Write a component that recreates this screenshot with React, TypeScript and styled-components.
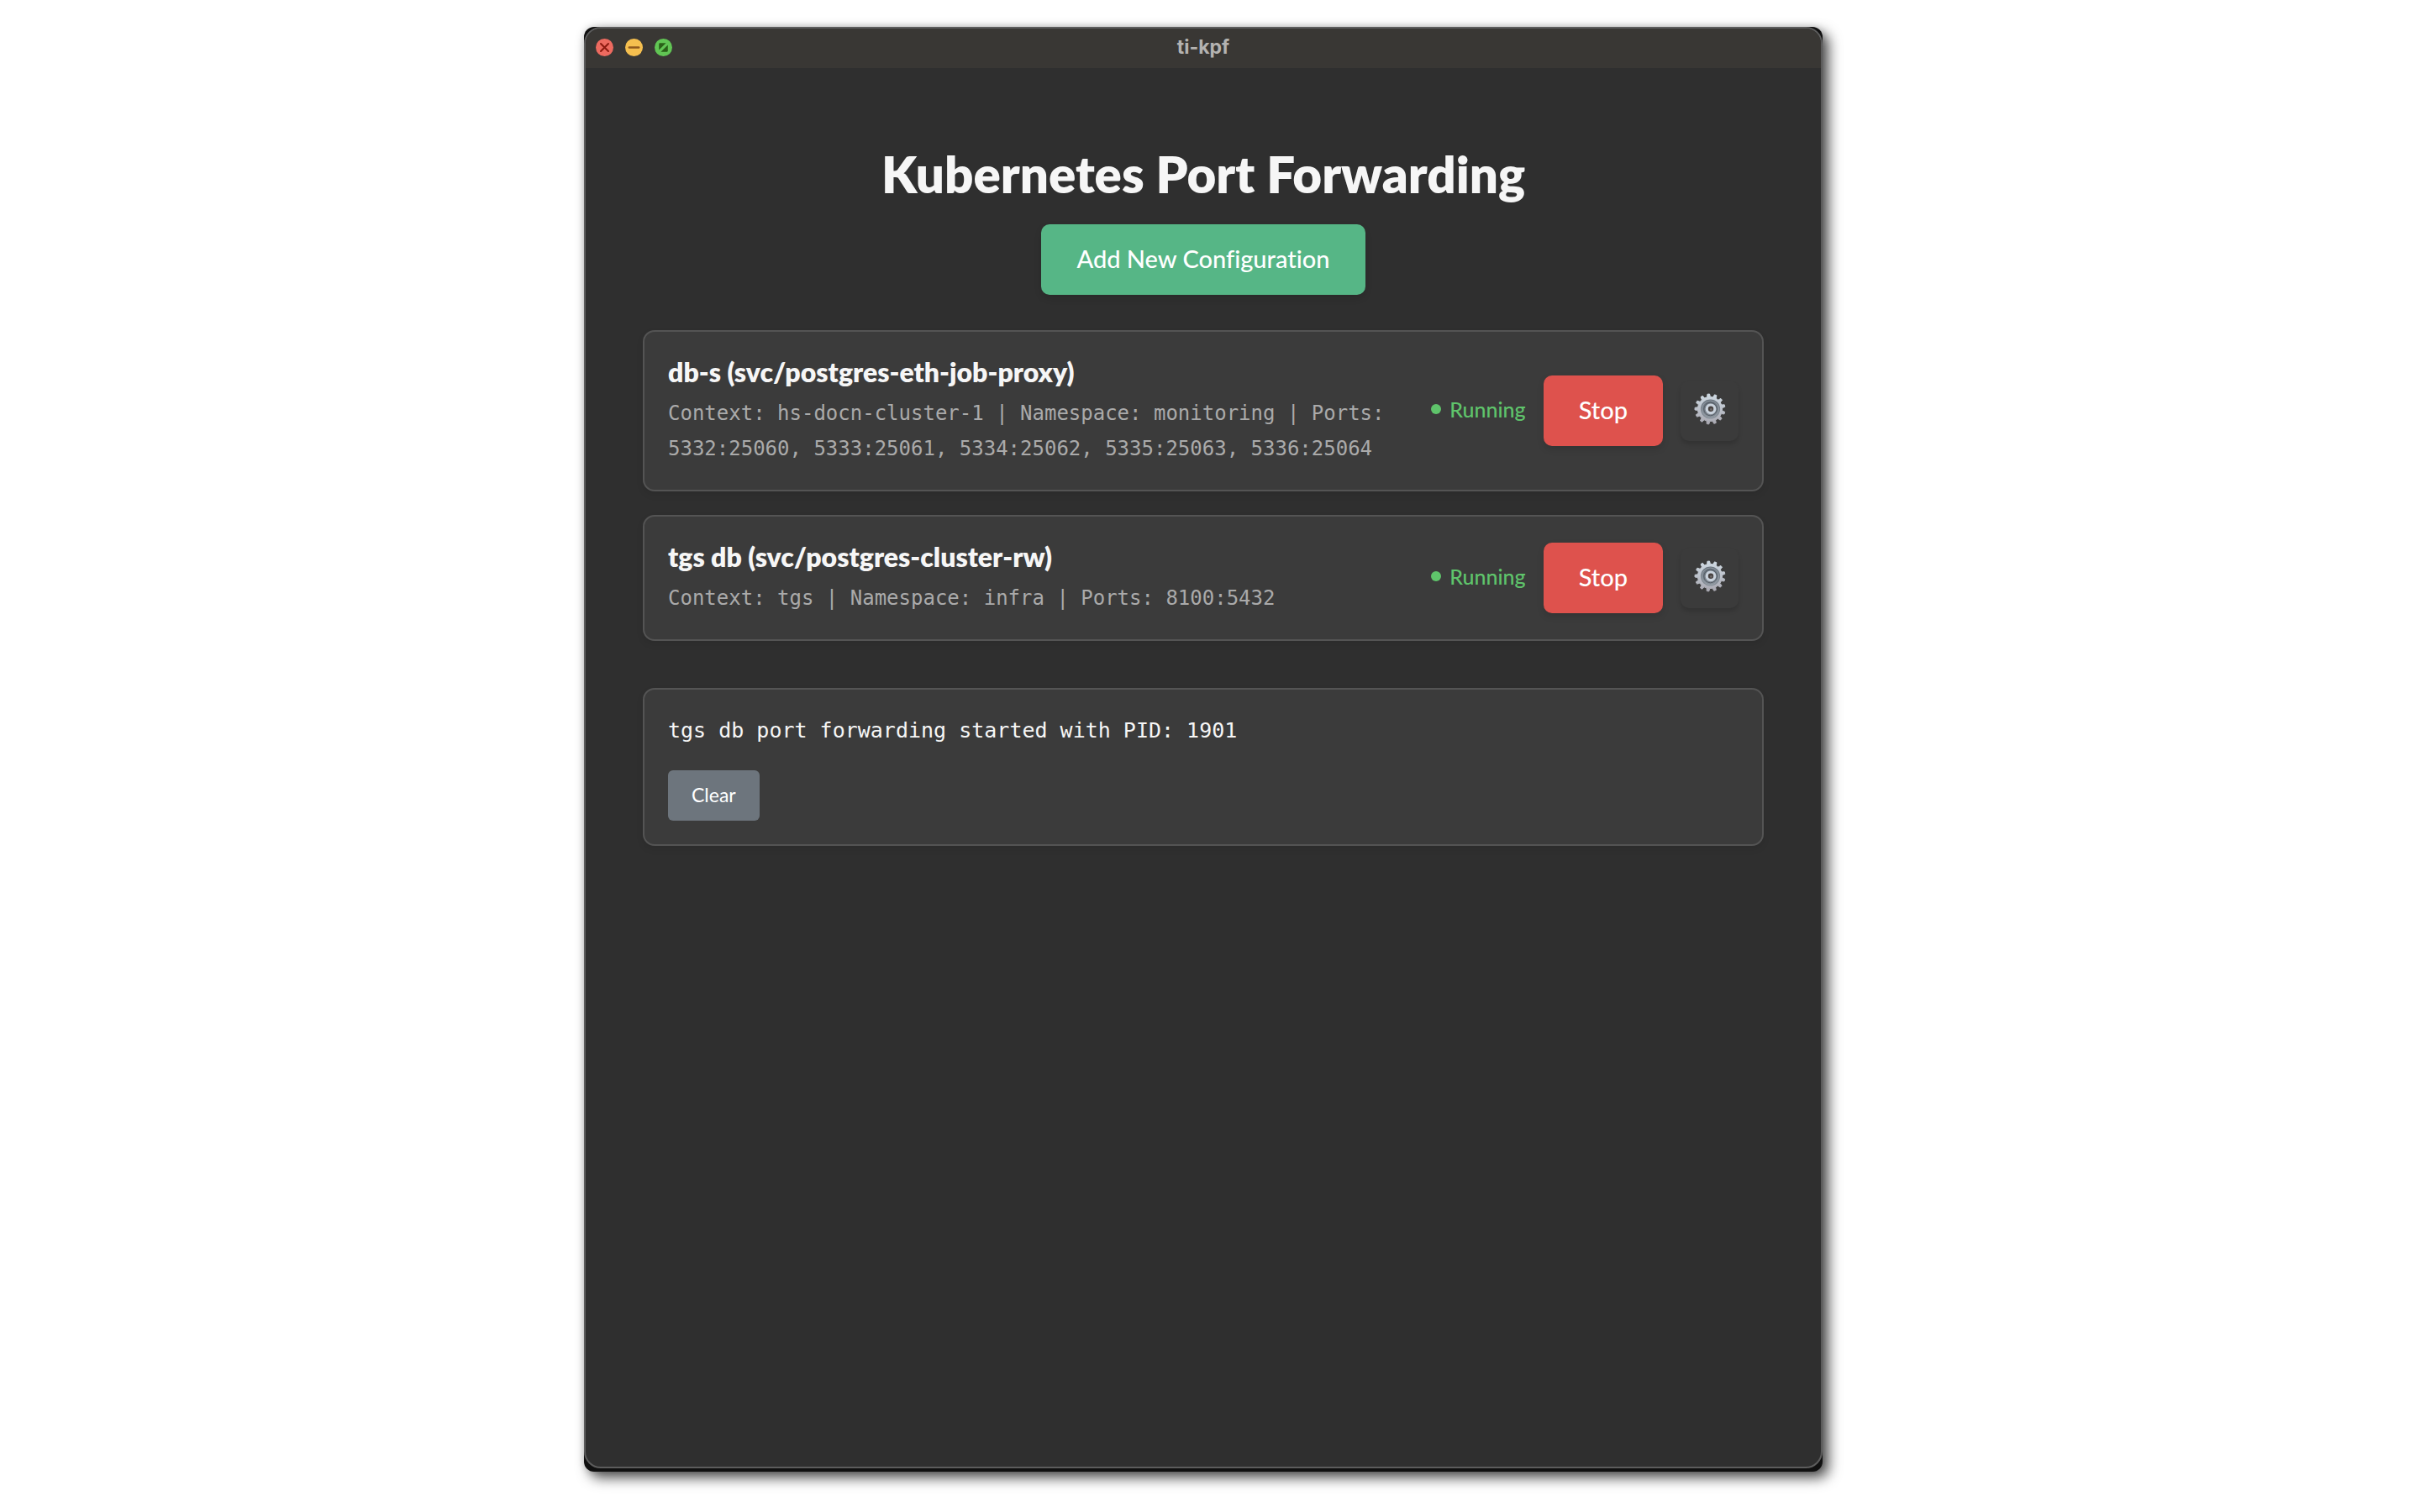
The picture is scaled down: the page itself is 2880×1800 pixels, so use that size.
import React from "react";
import styled, { createGlobalStyle } from "styled-components";

const GlobalStyle = createGlobalStyle`
  *, *::before, *::after { box-sizing: border-box; }
  body {
    margin: 0;
    background: #ffffff;
    color: #f6f6f6;
    font-family: Lato, "Open Sans", sans-serif;
    font-size: 28px;
    font-variant-ligatures: none;
    line-height: 42px;
  }
  h1, h2, p { margin: 0; }
  button { font-family: inherit; font-variant-ligatures: inherit; border: 0; margin: 0; cursor: pointer; }
`;

const Desktop = styled.div`
  display: flex;
  justify-content: center;
  min-height: 100vh;
  padding: 32px 16px 48px 0;
`;

const WindowShell = styled.div`
  display: flex;
  width: 100%;
  max-width: 1474px;
  padding-bottom: 4px;
  border-radius: 12px;
  background: #101010;
  box-shadow: 7px 7px 16px rgba(0, 0, 0, 0.7), 0 0 8px rgba(0, 0, 0, 0.14);
`;

const WindowFrame = styled.div`
  display: flex;
  flex-direction: column;
  flex: 1;
  min-width: 0;
  overflow: hidden;
  border: 2px solid #5c5c5c;
  border-radius: 20px;
  background: #2f2f2f;
`;

const TitleBar = styled.header`
  display: grid;
  grid-template-columns: 1fr auto 1fr;
  align-items: center;
  height: 47px;
  padding: 0 12px 2px;
  background: #393734;
`;

const TrafficLights = styled.div`
  display: flex;
  gap: 14px;
`;

const TrafficButton = styled.button`
  display: flex;
  width: 21px;
  height: 21px;
  padding: 0;
  border-radius: 50%;
  background: none;
`;

const WindowTitle = styled.span`
  padding-bottom: 2px;
  color: #b4b3b1;
  font-family: Inter, sans-serif;
  font-size: 23px;
  font-weight: 700;
  line-height: 28px;
`;

const Content = styled.main`
  display: flex;
  flex-direction: column;
  padding: 84px 68px;
`;

const PageHeader = styled.div`
  display: flex;
  flex-direction: column;
  align-items: center;
  gap: 18px;
  margin-bottom: 42px;
`;

const PageTitle = styled.h1`
  font-size: 60px;
  font-weight: 800;
  line-height: 84px;
`;

const ActionButton = styled.button<{ $tone: "add" | "stop" }>`
  height: 84px;
  padding: 0 42px 4px;
  border-radius: 10px;
  background: ${(p) => (p.$tone === "add" ? "#56b686" : "#de524d")};
  box-shadow: 0 4px 8px rgba(0, 0, 0, 0.12);
  color: #ffffff;
  font-size: 29px;
  font-weight: 500;
`;

const ConfigList = styled.div`
  display: flex;
  flex-direction: column;
  gap: 28px;
  margin-bottom: 56px;
`;

const Card = styled.section`
  padding: 28px;
  border: 2px solid #545454;
  border-radius: 14px;
  background: #3b3b3b;
  box-shadow: 0 4px 8px rgba(0, 0, 0, 0.08);
`;

const ConfigCard = styled(Card)`
  display: flex;
  align-items: center;
  gap: 28px;
`;

const ConfigInfo = styled.div`
  display: flex;
  flex-direction: column;
  flex: 1;
  gap: 8px;
  min-width: 0;
`;

const ConfigName = styled.h2`
  font-size: 32px;
  font-weight: 800;
  line-height: 40px;
`;

const Mono = styled.p`
  font-family: "DejaVu Sans Mono", monospace;
`;

const ConfigDetails = styled(Mono)`
  color: #aaaaaa;
  font-size: 24px;
  line-height: 42px;
`;

const Controls = styled.div`
  display: flex;
  align-items: center;
  gap: 21px;
`;

const Status = styled.span`
  display: flex;
  align-items: center;
  gap: 10px;
  padding-bottom: 4px;
  color: #5fc46b;
  font-size: 25px;
  font-weight: 500;
`;

const StatusDot = styled.span`
  width: 12px;
  height: 12px;
  border-radius: 50%;
  background: currentColor;
`;

const SettingsButton = styled.button`
  display: flex;
  align-items: center;
  justify-content: center;
  width: 69px;
  height: 72px;
  padding: 0 0 4px;
  border-radius: 10px;
  background: #3b3b3b;
  box-shadow: 0 4px 5px rgba(0, 0, 0, 0.14);
`;

const LogCard = styled(Card)`
  display: flex;
  flex-direction: column;
  align-items: flex-start;
  gap: 26px;
`;

const LogLine = styled(Mono)`
  font-size: 25px;
  line-height: 42px;
`;

const ClearButton = styled.button`
  height: 60px;
  padding: 0 28px 2px;
  border-radius: 6px;
  background: #6d757d;
  color: #ffffff;
  font-size: 23px;
`;

function CloseIcon() {
  return (
    <svg width="21" height="21" viewBox="0 0 21 21" aria-hidden="true">
      <circle cx="10.5" cy="10.5" r="10.5" fill="#ed6a5f" />
      <path d="M6 6l9 9M15 6l-9 9" stroke="#8c1a10" strokeWidth="2" strokeLinecap="round" />
    </svg>
  );
}

function MinimizeIcon() {
  return (
    <svg width="21" height="21" viewBox="0 0 21 21" aria-hidden="true">
      <circle cx="10.5" cy="10.5" r="10.5" fill="#f5bf4f" />
      <path d="M4.8 10.5h11.4" stroke="#90591d" strokeWidth="2.4" strokeLinecap="round" />
    </svg>
  );
}

function ZoomIcon() {
  return (
    <svg width="21" height="21" viewBox="0 0 21 21" aria-hidden="true">
      <circle cx="10.5" cy="10.5" r="10.5" fill="#61c554" />
      <path
        d="M6.4 5.2h7.2L5.2 13.6V6.4a1.2 1.2 0 0 1 1.2-1.2zM14.8 15.8H7.4l8.4-8.4v7.2a1.2 1.2 0 0 1-1 1.2z"
        fill="#2a6118"
      />
    </svg>
  );
}

const TEETH = 13;

function gearOutline(center: number, outer: number, root: number) {
  const step = (Math.PI * 2) / TEETH;
  const points: string[] = [];
  for (let i = 0; i < TEETH; i++) {
    const mid = i * step - Math.PI / 2 - 0.1;
    const corners: [number, number][] = [
      [root, mid - step * 0.27],
      [outer, mid - step * 0.15],
      [outer, mid + step * 0.15],
      [root, mid + step * 0.27],
    ];
    for (const [r, a] of corners) {
      points.push(`${(center + r * Math.cos(a)).toFixed(2)} ${(center + r * Math.sin(a)).toFixed(2)}`);
    }
  }
  return `M${points.join("L")}Z`;
}

function GearIcon({ id }: { id: string }) {
  return (
    <svg width="40" height="40" viewBox="0 0 40 40" aria-hidden="true">
      <defs>
        <linearGradient id={`${id}-metal`} x1="0" y1="0" x2="0" y2="1">
          <stop offset="0" stopColor="#cfdae3" />
          <stop offset="1" stopColor="#a9a8b1" />
        </linearGradient>
        <linearGradient id={`${id}-dish`} x1="0" y1="0" x2="0" y2="1">
          <stop offset="0" stopColor="#66707a" />
          <stop offset="1" stopColor="#8b939c" />
        </linearGradient>
      </defs>
      <path
        d={gearOutline(20, 18, 14.6)}
        fill={`url(#${id}-metal)`}
        stroke={`url(#${id}-metal)`}
        strokeWidth="1"
        strokeLinejoin="round"
      />
      <circle cx="20.5" cy="20" r="11.6" fill={`url(#${id}-dish)`} />
      <circle cx="20.5" cy="20" r="10" fill="none" stroke="#9aa3ac" strokeWidth="0.8" />
      <circle cx="20.5" cy="20" r="7.8" fill="none" stroke="#565e67" strokeWidth="1" />
      <circle cx="21" cy="19.8" r="4.8" fill="#47413f" stroke="#c9d2dc" strokeWidth="3.2" />
      <circle cx="21.4" cy="20.4" r="1.4" fill="#6e6a6a" />
    </svg>
  );
}

interface PortConfig {
  id: string;
  name: string;
  service: string;
  context: string;
  namespace: string;
  ports: string[];
}

const CONFIGS: PortConfig[] = [
  {
    id: "db-s",
    name: "db-s",
    service: "svc/postgres-eth-job-proxy",
    context: "hs-docn-cluster-1",
    namespace: "monitoring",
    ports: ["5332:25060", "5333:25061", "5334:25062", "5335:25063", "5336:25064"],
  },
  {
    id: "tgs-db",
    name: "tgs db",
    service: "svc/postgres-cluster-rw",
    context: "tgs",
    namespace: "infra",
    ports: ["8100:5432"],
  },
];

function ConfigRow({ config }: { config: PortConfig }) {
  return (
    <ConfigCard>
      <ConfigInfo>
        <ConfigName>{`${config.name} (${config.service})`}</ConfigName>
        <ConfigDetails>
          {`Context: ${config.context} | Namespace: ${config.namespace} | Ports: ${config.ports.join(", ")}`}
        </ConfigDetails>
      </ConfigInfo>
      <Controls>
        <Status>
          <StatusDot />
          Running
        </Status>
        <ActionButton type="button" $tone="stop">Stop</ActionButton>
        <SettingsButton type="button" aria-label={`Settings for ${config.name}`}>
          <GearIcon id={config.id} />
        </SettingsButton>
      </Controls>
    </ConfigCard>
  );
}

export default function App() {
  return (
    <>
      <GlobalStyle />
      <Desktop>
        <WindowShell>
          <WindowFrame>
            <TitleBar>
              <TrafficLights>
                <TrafficButton type="button" aria-label="Close"><CloseIcon /></TrafficButton>
                <TrafficButton type="button" aria-label="Minimize"><MinimizeIcon /></TrafficButton>
                <TrafficButton type="button" aria-label="Zoom"><ZoomIcon /></TrafficButton>
              </TrafficLights>
              <WindowTitle>ti-kpf</WindowTitle>
            </TitleBar>
            <Content>
              <PageHeader>
                <PageTitle>Kubernetes Port Forwarding</PageTitle>
                <ActionButton type="button" $tone="add">Add New Configuration</ActionButton>
              </PageHeader>
              <ConfigList>
                {CONFIGS.map((config) => (
                  <ConfigRow key={config.id} config={config} />
                ))}
              </ConfigList>
              <LogCard>
                <LogLine>tgs db port forwarding started with PID: 1901</LogLine>
                <ClearButton type="button">Clear</ClearButton>
              </LogCard>
            </Content>
          </WindowFrame>
        </WindowShell>
      </Desktop>
    </>
  );
}
